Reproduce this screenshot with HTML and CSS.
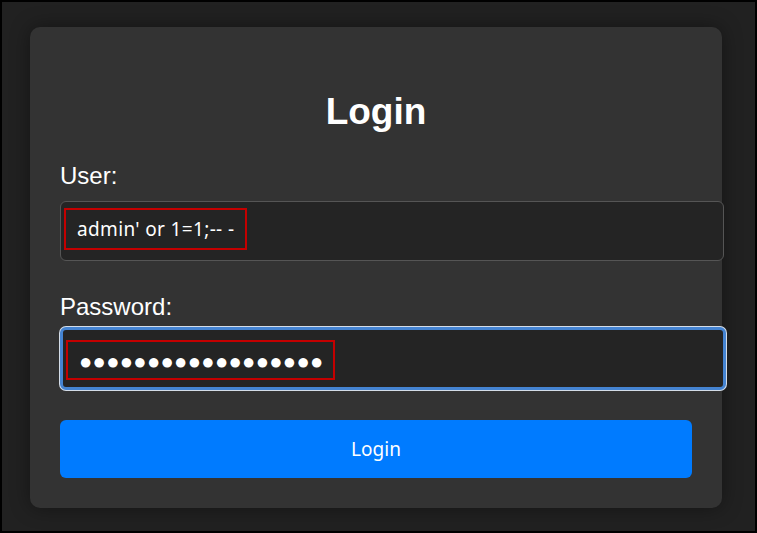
FILE: index.html
```html
<!DOCTYPE html>
<html lang="en">
<head>
    <meta charset="UTF-8">
    <meta name="viewport" content="width=device-width, initial-scale=1.0">
    <title>Login</title>
    <link rel="stylesheet" href="styles.css">
</head>
<body>
    <div class="pagina">
        <div class="login-container">
            <h2>Login</h2>

            <label class="etiqueta">User:</label>
            <div class="campo">
                <span class="marca marca-user">admin' or 1=1;-- -</span>
            </div>

            <label class="etiqueta etiqueta-pass">Password:</label>
            <div class="campo campo-activo">
                <span class="marca marca-pass">&#9679;&#9679;&#9679;&#9679;&#9679;&#9679;&#9679;&#9679;&#9679;&#9679;&#9679;&#9679;&#9679;&#9679;&#9679;&#9679;&#9679;&#9679;</span>
            </div>

            <button class="login-btn">Login</button>
        </div>
    </div>
</body>
</html>
```

FILE: styles.css
```css
body {
    margin: 0;
    font-family: "Liberation Sans", Arial, sans-serif;
    color: white;
}

.pagina {
    box-sizing: border-box;
    height: 533px;
    border: 2px solid #000;
    background-color: #212121;
    padding: 25px 0 0 28px;
    overflow: hidden;
}

.login-container {
    box-sizing: border-box;
    width: 692px;
    height: 481px;
    background-color: #333333;
    border-radius: 10px;
    box-shadow: 0 0 20px rgba(0, 0, 0, 0.4);
    padding: 30px;
}

.login-container h2 {
    text-align: center;
    font-size: 37px;
    font-weight: bold;
    margin: 34px 0 29px;
    line-height: 42px;
}

.etiqueta {
    display: block;
    font-size: 24px;
    line-height: 28px;
    margin-bottom: 11px;
}

.etiqueta-pass {
    margin-bottom: 6px;
}

.campo {
    box-sizing: border-box;
    width: 664px;
    height: 60px;
    background-color: #242424;
    border: 1px solid #555;
    border-radius: 6px;
    padding: 6px 3px;
    margin-bottom: 32px;
    display: flex;
    align-items: flex-start;
}

.campo-activo {
    width: 666px;
    height: 63px;
    border: 3px solid #4584d2;
    box-shadow: 0 0 0 1px #d4dde8;
    padding: 10px 3px;
    margin-bottom: 30px;
}

/* recuadro rojo sobre el texto escrito */
.marca {
    border: 2px solid #c40000;
    font-family: "Noto Sans", "Open Sans", sans-serif;
}

.marca-user {
    font-size: 19px;
    letter-spacing: 0.35px;
    padding: 0 11px 0 11px;
    line-height: 38px;
}

.marca-pass {
    font-size: 22px;
    letter-spacing: 0.3px;
    padding: 0 9px 0 11px;
    line-height: 36px;
}

.login-btn {
    display: block;
    width: 632px;
    height: 58px;
    background-color: #007bff;
    color: white;
    border: none;
    border-radius: 6px;
    font-family: "Noto Sans", "Open Sans", sans-serif;
    font-size: 19px;
    cursor: pointer;
}
```
